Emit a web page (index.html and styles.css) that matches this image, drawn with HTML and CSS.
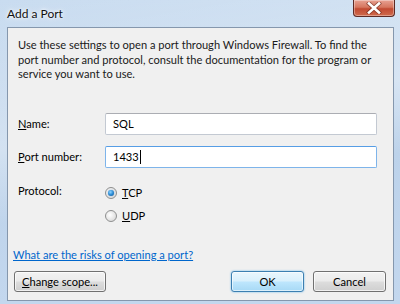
FILE: index.html
```html
<!DOCTYPE html>
<html>
<head>
<meta charset="utf-8">
<link rel="stylesheet" href="styles.css">
</head>
<body>
<div class="window">
  <div class="titlebar">
    <span class="title">Add a Port</span>
    <div class="close">
      <svg width="16" height="12" viewBox="0 0 16 12"><path d="M3 1.5 L13 10.5 M13 1.5 L3 10.5" stroke="#5a1a10" stroke-width="4.2" stroke-linecap="square" opacity="0.55"/><path d="M3 1.5 L13 10.5 M13 1.5 L3 10.5" stroke="#ffffff" stroke-width="2.6" stroke-linecap="square"/></svg>
    </div>
  </div>
  <div class="client">
    <p class="intro">Use these settings to open a port through Windows Firewall. To find the port number and protocol, consult the documentation for the program or service you want to use.</p>
    <div class="form">
      <label class="lbl"><u>N</u>ame:</label>
      <div class="field">SQL</div>
      <label class="lbl"><u>P</u>ort number:</label>
      <div class="field focused">1433<span class="caret"></span></div>
      <label class="lbl proto">Protocol:</label>
      <div class="radios">
        <div class="radio-row"><span class="radio checked"></span><span><u>T</u>CP</span></div>
        <div class="radio-row"><span class="radio"></span><span><u>U</u>DP</span></div>
      </div>
    </div>
    <a class="link" href="#">What are the risks of opening a port?</a>
    <div class="buttons">
      <button class="btn scope"><u>C</u>hange scope...</button>
      <div class="right">
        <button class="btn default">OK</button>
        <button class="btn">Cancel</button>
      </div>
    </div>
  </div>
</div>
</body>
</html>
```
FILE: styles.css
```css
html, body {
  margin: 0;
  padding: 0;
}
body {
  font-family: Lato, "Liberation Sans", sans-serif;
  font-size: 11.1px;
  color: #000;
}
.window {
  width: 400px;
  height: 304px;
  box-sizing: border-box;
  background:
    linear-gradient(170deg, rgba(255,255,255,0) 0%, rgba(255,255,255,0.35) 40%, rgba(255,255,255,0) 60%),
    linear-gradient(180deg, #c9dcf0 0%, #bcd2ea 50%, #c3d7ee 100%);
  display: flex;
  flex-direction: column;
}
.titlebar {
  height: 27px;
  display: flex;
  justify-content: space-between;
  align-items: flex-start;
  padding-left: 7px;
  padding-right: 5px;
}
.title {
  margin-top: 6px;
  font-size: 12px;
  line-height: 16px;
  color: #111;
  text-shadow: 0 0 6px #fff, 0 0 3px #fff;
}
.close {
  width: 42px;
  height: 17px;
  box-sizing: border-box;
  border: 1px solid #5d2a25;
  border-top: none;
  border-radius: 0 0 4px 4px;
  background: linear-gradient(180deg, #e8a293 0%, #d6765f 45%, #c24a32 55%, #cf6a4c 100%);
  box-shadow: inset 0 0 0 1px rgba(255,255,255,0.35);
  display: flex;
  align-items: center;
  justify-content: center;
}
.client {
  margin: 0 6px 0 7px;
  height: 274px;
  box-sizing: border-box;
  border: 1px solid #8597ad;
  background: #f0f0f0;
  display: flex;
  flex-direction: column;
  padding: 10px 8px 8px 10px;
}
.intro {
  margin: 0;
  line-height: 14.5px;
  padding-right: 14px;
  color: #1a1a1a;
}
.form {
  margin-top: 31px;
  display: grid;
  grid-template-columns: 87px 272px;
  grid-auto-rows: auto;
  row-gap: 11px;
  align-items: center;
}
.lbl {
  line-height: 15px;
}
.lbl.proto {
  align-self: start;
  margin-top: 4px;
}
.field {
  height: 22px;
  box-sizing: border-box;
  border: 1px solid #c3c9d2;
  border-top-color: #abadb3;
  border-radius: 2px;
  background: #fff;
  padding: 0 0 0 7px;
  line-height: 20px;
  display: flex;
  align-items: center;
}
.field.focused {
  border-color: #7eb4ea;
  border-top-color: #569de5;
}
.caret {
  display: inline-block;
  width: 1px;
  height: 14px;
  background: #000;
  margin-left: 1px;
}
.radios {
  display: flex;
  flex-direction: column;
  gap: 3px;
  margin-top: 4px;
}
.radio-row {
  height: 20px;
  display: flex;
  align-items: center;
  gap: 5px;
}
.radio {
  width: 12px;
  height: 12px;
  border-radius: 50%;
  box-sizing: border-box;
  border: 1px solid #8e8f8f;
  background: radial-gradient(circle at 40% 40%, #ffffff 0%, #e6e6e6 55%, #cfcfcf 100%);
  position: relative;
}
.radio.checked::after {
  content: "";
  position: absolute;
  left: 2px;
  top: 2px;
  width: 6px;
  height: 6px;
  border-radius: 50%;
  background: radial-gradient(circle at 40% 35%, #8fd4ff 0%, #2a8ad4 50%, #0d4f8b 100%);
  box-shadow: 0 0 1px #1e6fb5;
}
.link {
  margin-top: 21px;
  margin-left: -5px;
  color: #0066cc;
  text-decoration: underline;
  line-height: 15px;
  align-self: flex-start;
}
.buttons {
  margin-top: auto;
  display: flex;
  justify-content: space-between;
  margin-left: -4px;
  margin-right: -1px;
}
.right {
  display: flex;
  gap: 9px;
}
.btn {
  font-family: inherit;
  font-size: 11.1px;
  color: #000;
  height: 21px;
  width: 73px;
  box-sizing: border-box;
  border: 1px solid #707070;
  border-radius: 3px;
  background: linear-gradient(180deg, #f2f2f2 0%, #ebebeb 48%, #dddddd 52%, #cfcfcf 100%);
  box-shadow: inset 0 0 0 1px rgba(255,255,255,0.7);
  padding: 0;
  line-height: 18px;
}
.btn.scope {
  width: 92px;
}
.btn.default {
  border-color: #3c7fb1;
  background: linear-gradient(180deg, #eaf6fd 0%, #d9f0fc 48%, #bee6fd 52%, #a7d9f5 100%);
  box-shadow: inset 0 0 0 1px rgba(255,255,255,0.6), 0 0 2px #61b5ea;
}
```
